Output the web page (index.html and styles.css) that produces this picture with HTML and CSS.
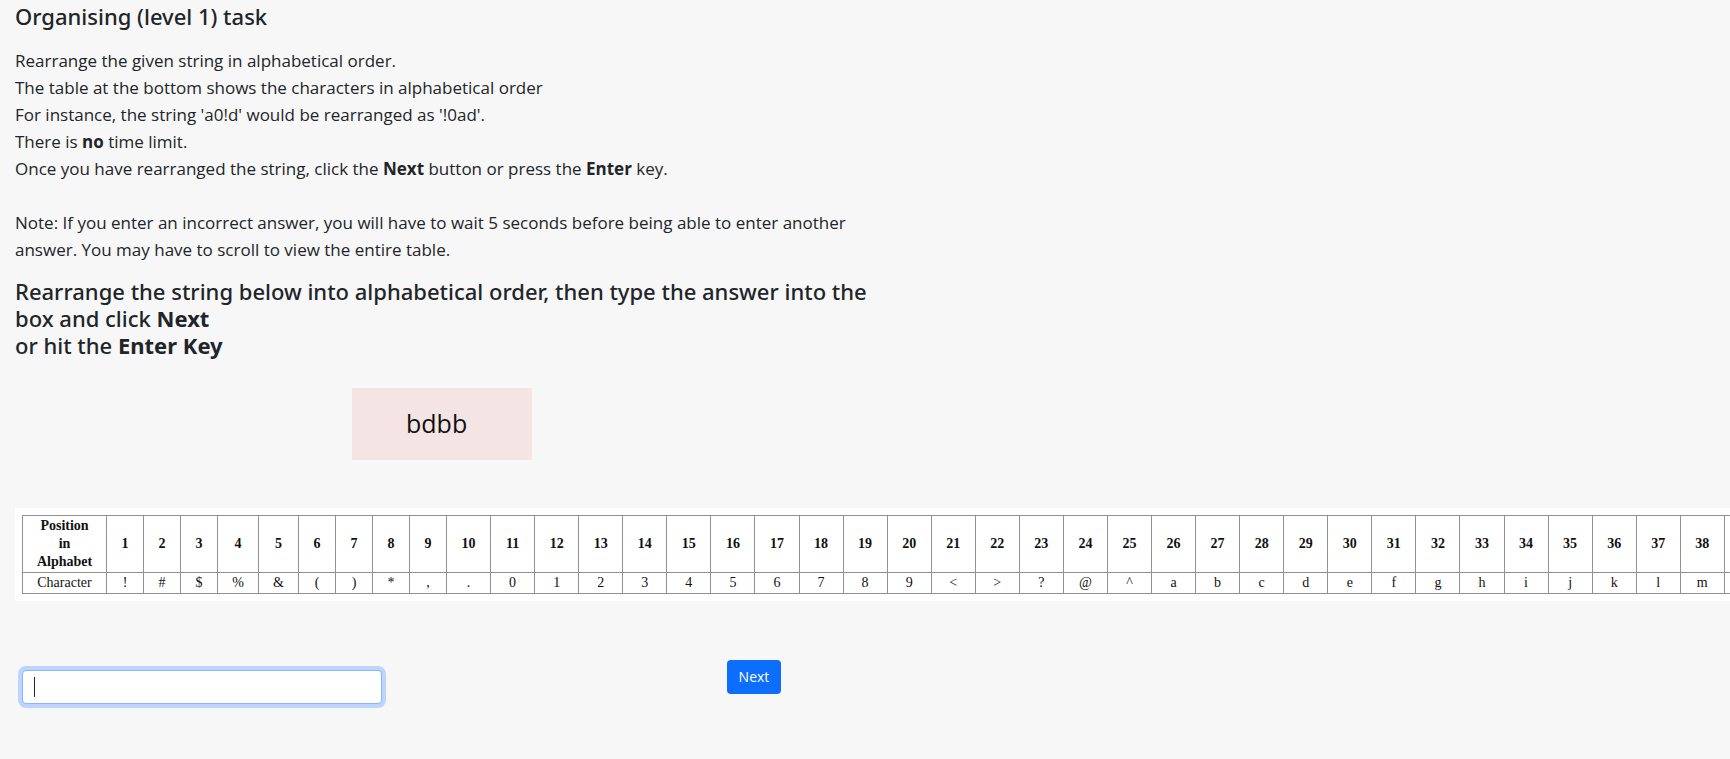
FILE: index.html
```html
<!DOCTYPE html>
<html lang="en">
<head>
<meta charset="utf-8">
<title>Organising (level 1) task</title>
<link rel="stylesheet" href="styles.css">
</head>
<body>
<main>
  <section class="intro">
    <h1 class="heading">Organising (level 1) task</h1>
    <p class="instructions">
      Rearrange the given string in alphabetical order.<br>
      The table at the bottom shows the characters in alphabetical order<br>
      For instance, the string 'a0!d' would be rearranged as '!0ad'.<br>
      There is <b>no</b> time limit.<br>
      Once you have rearranged the string, click the <b>Next</b> button or press the <b>Enter</b> key.<br>
      <br>
      Note: If you enter an incorrect answer, you will have to wait 5 seconds before being able to enter another answer. You may have to scroll to view the entire table.
    </p>
    <h2 class="heading"><label for="answer">Rearrange the string below into alphabetical order, then type the answer into the box and click <b>Next</b><br>or hit the <b>Enter Key</b></label></h2>
    <div class="puzzle">bdbb</div>
  </section>
  <div class="table-wrap">
    <table class="alphabet">
      <colgroup><col class="c-label"><col class="c-narrow" span="3"><col class="c-mid"><col class="c-mid-2"><col class="c-narrow" span="4"><col span="42"></colgroup>
      <tbody>
      <tr class="positions"><th scope="row">Position in Alphabet</th><th>1</th><th>2</th><th>3</th><th>4</th><th>5</th><th>6</th><th>7</th><th>8</th><th>9</th><th>10</th><th>11</th><th>12</th><th>13</th><th>14</th><th>15</th><th>16</th><th>17</th><th>18</th><th>19</th><th>20</th><th>21</th><th>22</th><th>23</th><th>24</th><th>25</th><th>26</th><th>27</th><th>28</th><th>29</th><th>30</th><th>31</th><th>32</th><th>33</th><th>34</th><th>35</th><th>36</th><th>37</th><th>38</th><th>39</th><th>40</th><th>41</th><th>42</th><th>43</th><th>44</th><th>45</th><th>46</th><th>47</th><th>48</th><th>49</th><th>50</th><th>51</th></tr>
      <tr class="characters"><th scope="row">Character</th><td>!</td><td>#</td><td>$</td><td>%</td><td>&amp;</td><td>(</td><td>)</td><td>*</td><td>,</td><td>.</td><td>0</td><td>1</td><td>2</td><td>3</td><td>4</td><td>5</td><td>6</td><td>7</td><td>8</td><td>9</td><td>&lt;</td><td>&gt;</td><td>?</td><td>@</td><td>^</td><td>a</td><td>b</td><td>c</td><td>d</td><td>e</td><td>f</td><td>g</td><td>h</td><td>i</td><td>j</td><td>k</td><td>l</td><td>m</td><td>n</td><td>o</td><td>p</td><td>q</td><td>r</td><td>s</td><td>t</td><td>u</td><td>v</td><td>w</td><td>x</td><td>y</td><td>z</td></tr>
      </tbody>
    </table>
  </div>
  <form class="answer-form">
    <div class="answer-cell">
      <div class="field">
        <input class="answer" id="answer" type="text" autocomplete="off">
        <span class="caret"></span>
      </div>
    </div>
    <div><button class="next" type="button">Next</button></div>
  </form>
</main>
</body>
</html>
```
FILE: styles.css
```css
* {
  box-sizing: border-box;
}

body {
  margin: 0;
  background: #f7f7f7;
  color: #212529;
  font-family: "Segoe UI", "Open Sans", "Noto Sans", sans-serif;
  font-size: 17px;
  line-height: 27px;
  overflow-x: hidden;
}

.intro {
  width: calc(50% + 4px);
  padding: 3px 0 0 15px;
}

.heading {
  margin: 0;
  font-family: "Segoe UI", "Noto Sans", "Open Sans", sans-serif;
  font-size: 22px;
  font-weight: 500;
  line-height: 27px;
}

.instructions {
  margin: 17px 0 15px;
}

b {
  font-weight: 700;
}

.puzzle {
  width: 180px;
  margin: 29px auto 48px;
  padding: 17px 54px 19px;
  background: #f4e4e4;
  color: #111;
  font-size: 25px;
  line-height: 36px;
}

.table-wrap {
  margin-left: 15px;
  padding: 7px 0 7px 7px;
  background: #fff;
  overflow: hidden;
}

.alphabet {
  width: 2276px;
  table-layout: fixed;
  border-collapse: collapse;
  color: #111;
  font-family: "Times New Roman", "Liberation Serif", serif;
  font-size: 14px;
  line-height: 18px;
  text-align: center;
}

.alphabet th,
.alphabet td {
  padding: 1px 12px;
  border: 1px solid #919191;
}

.alphabet td,
.positions th + th {
  padding: 1px 0;
}

.characters th {
  font-weight: 400;
}

.c-label {
  width: 84px;
}

.c-narrow {
  width: 37px;
}

.c-mid {
  width: 41px;
}

.c-mid-2 {
  width: 40px;
}

.answer-form {
  display: grid;
  grid-template-columns: 42% 1fr;
  padding: 59px 0;
}

.answer-cell {
  padding: 10px 22px 0;
}

.field {
  position: relative;
  width: 360px;
}

.answer {
  display: block;
  width: 100%;
  height: 34px;
  padding: 4px 11px;
  border: 1px solid #86b7fe;
  border-radius: 4px;
  outline: none;
  background: #fff;
  box-shadow: 0 0 0 4px #bdd5fb;
  color: #212529;
  font: inherit;
}

.caret {
  position: absolute;
  top: 7px;
  left: 12px;
  width: 1px;
  height: 20px;
  background: #212529;
}

.next {
  display: block;
  padding: 6px 12px;
  border: 0;
  border-radius: 4px;
  background: #0d6efd;
  color: #fff;
  font: inherit;
  font-size: 14px;
  line-height: 22px;
}
```
